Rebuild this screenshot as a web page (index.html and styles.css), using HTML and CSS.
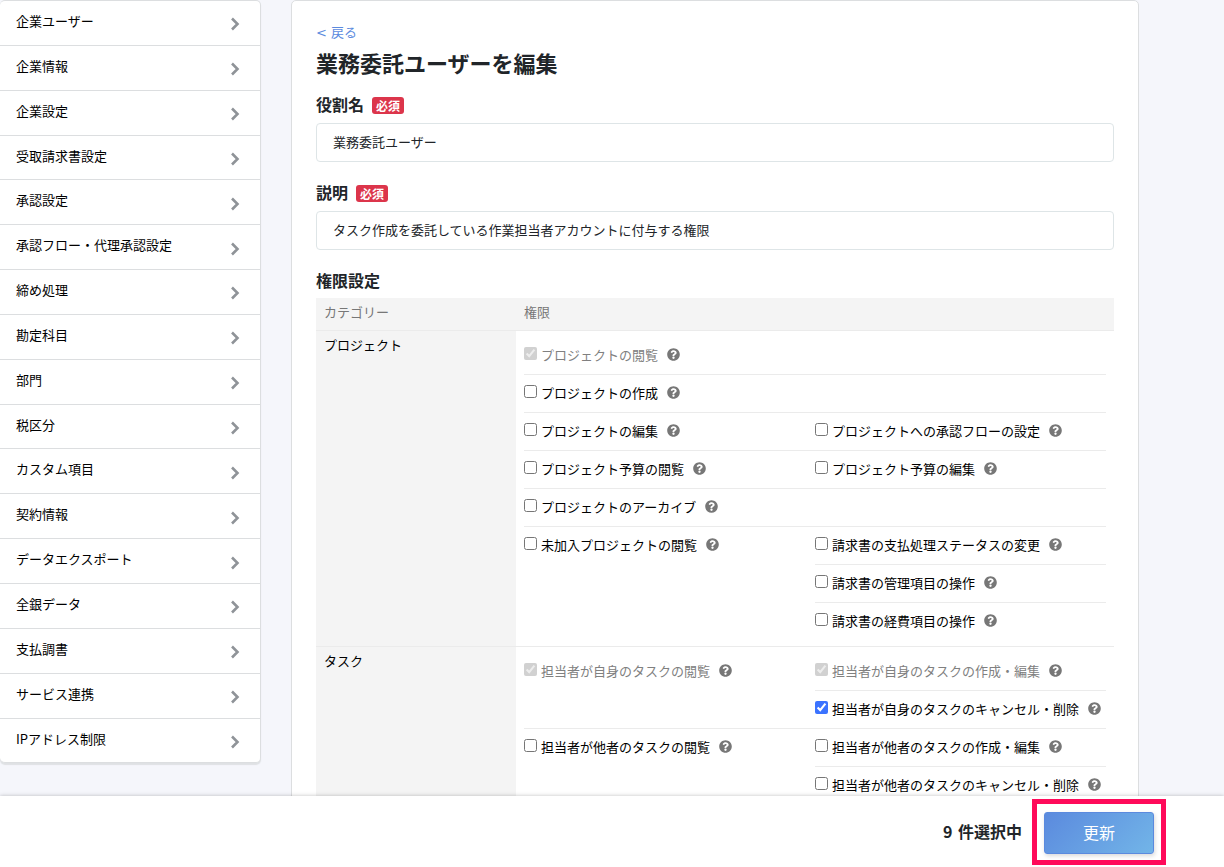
FILE: index.html
```html
<!DOCTYPE html>
<html lang="ja">
<head>
<meta charset="utf-8">
<meta name="viewport" content="width=device-width, initial-scale=1">
<title>業務委託ユーザーを編集</title>
<link rel="stylesheet" href="styles.css">
</head>
<body>
<svg class="sprite" aria-hidden="true">
  <symbol id="chevron" viewBox="0 0 10 14"><path d="M2 1.5 7.5 7 2 12.5" fill="none" stroke="currentColor" stroke-width="2.6"/></symbol>
  <symbol id="help" viewBox="0 0 512 512"><path fill="currentColor" d="M504 256c0 137-111 248-248 248S8 393 8 256 119 8 256 8s248 111 248 248zM262.700 90c-54.500 0-89.300 23-116.500 63.800-3.500 5.300-2.400 12.400 2.700 16.300l34.700 26.300c5.200 3.900 12.600 3 16.700-2.100 17.900-22.700 30.100-35.800 57.300-35.800 20.400 0 45.700 13.100 45.700 33 0 15-12.400 22.700-32.500 34C247.100 238.500 216 255 216 296v4c0 6.600 5.400 12 12 12h56c6.600 0 12-5.400 12-12v-1.300c0-28.800 84-30 84-108C380 132 319 90 262.700 90zM256 338c-25.400 0-46 20.600-46 46s20.600 46 46 46 46-20.600 46-46-20.600-46-46-46z"/></symbol>
</svg>
<div class="app">
  <div class="content">
    <nav class="sidebar" aria-label="設定メニュー">
      <a class="menu-item" href="#">企業ユーザー<svg class="chevron"><use href="#chevron"/></svg></a>
      <a class="menu-item" href="#">企業情報<svg class="chevron"><use href="#chevron"/></svg></a>
      <a class="menu-item" href="#">企業設定<svg class="chevron"><use href="#chevron"/></svg></a>
      <a class="menu-item" href="#">受取請求書設定<svg class="chevron"><use href="#chevron"/></svg></a>
      <a class="menu-item" href="#">承認設定<svg class="chevron"><use href="#chevron"/></svg></a>
      <a class="menu-item" href="#">承認フロー・代理承認設定<svg class="chevron"><use href="#chevron"/></svg></a>
      <a class="menu-item" href="#">締め処理<svg class="chevron"><use href="#chevron"/></svg></a>
      <a class="menu-item" href="#">勘定科目<svg class="chevron"><use href="#chevron"/></svg></a>
      <a class="menu-item" href="#">部門<svg class="chevron"><use href="#chevron"/></svg></a>
      <a class="menu-item" href="#">税区分<svg class="chevron"><use href="#chevron"/></svg></a>
      <a class="menu-item" href="#">カスタム項目<svg class="chevron"><use href="#chevron"/></svg></a>
      <a class="menu-item" href="#">契約情報<svg class="chevron"><use href="#chevron"/></svg></a>
      <a class="menu-item" href="#">データエクスポート<svg class="chevron"><use href="#chevron"/></svg></a>
      <a class="menu-item" href="#">全銀データ<svg class="chevron"><use href="#chevron"/></svg></a>
      <a class="menu-item" href="#">支払調書<svg class="chevron"><use href="#chevron"/></svg></a>
      <a class="menu-item" href="#">サービス連携<svg class="chevron"><use href="#chevron"/></svg></a>
      <a class="menu-item" href="#">IPアドレス制限<svg class="chevron"><use href="#chevron"/></svg></a>
    </nav>

    <main class="card">
      <a class="back" href="#">&lt; 戻る</a>
      <h1 class="title">業務委託ユーザーを編集</h1>

      <div class="field">
        <label class="label" for="role-name">役割名<span class="badge">必須</span></label>
        <input class="input" id="role-name" type="text" value="業務委託ユーザー">
      </div>
      <div class="field">
        <label class="label" for="role-desc">説明<span class="badge">必須</span></label>
        <input class="input" id="role-desc" type="text" value="タスク作成を委託している作業担当者アカウントに付与する権限">
      </div>

      <h2 class="subtitle">権限設定</h2>
      <table class="permissions">
        <thead>
          <tr><th class="category">カテゴリー</th><th>権限</th></tr>
        </thead>
        <tbody>
          <tr>
            <th class="category" scope="row">プロジェクト</th>
            <td>
              <div class="group">
                <div class="options"><div class="option"><input type="checkbox" id="p1" checked disabled><label for="p1">プロジェクトの閲覧</label><svg class="help"><use href="#help"/></svg></div></div>
              </div>
              <div class="group">
                <div class="options"><div class="option"><input type="checkbox" id="p2"><label for="p2">プロジェクトの作成</label><svg class="help"><use href="#help"/></svg></div></div>
              </div>
              <div class="group">
                <div class="options"><div class="option"><input type="checkbox" id="p3"><label for="p3">プロジェクトの編集</label><svg class="help"><use href="#help"/></svg></div></div>
                <div class="options"><div class="option"><input type="checkbox" id="p4"><label for="p4">プロジェクトへの承認フローの設定</label><svg class="help"><use href="#help"/></svg></div></div>
              </div>
              <div class="group">
                <div class="options"><div class="option"><input type="checkbox" id="p5"><label for="p5">プロジェクト予算の閲覧</label><svg class="help"><use href="#help"/></svg></div></div>
                <div class="options"><div class="option"><input type="checkbox" id="p6"><label for="p6">プロジェクト予算の編集</label><svg class="help"><use href="#help"/></svg></div></div>
              </div>
              <div class="group">
                <div class="options"><div class="option"><input type="checkbox" id="p7"><label for="p7">プロジェクトのアーカイブ</label><svg class="help"><use href="#help"/></svg></div></div>
              </div>
              <div class="group">
                <div class="options"><div class="option"><input type="checkbox" id="p8"><label for="p8">未加入プロジェクトの閲覧</label><svg class="help"><use href="#help"/></svg></div></div>
                <div class="options">
                  <div class="option"><input type="checkbox" id="p9"><label for="p9">請求書の支払処理ステータスの変更</label><svg class="help"><use href="#help"/></svg></div>
                  <div class="option"><input type="checkbox" id="p10"><label for="p10">請求書の管理項目の操作</label><svg class="help"><use href="#help"/></svg></div>
                  <div class="option"><input type="checkbox" id="p11"><label for="p11">請求書の経費項目の操作</label><svg class="help"><use href="#help"/></svg></div>
                </div>
              </div>
            </td>
          </tr>
          <tr>
            <th class="category" scope="row">タスク</th>
            <td>
              <div class="group">
                <div class="options"><div class="option"><input type="checkbox" id="t1" checked disabled><label for="t1">担当者が自身のタスクの閲覧</label><svg class="help"><use href="#help"/></svg></div></div>
                <div class="options">
                  <div class="option"><input type="checkbox" id="t2" checked disabled><label for="t2">担当者が自身のタスクの作成・編集</label><svg class="help"><use href="#help"/></svg></div>
                  <div class="option"><input type="checkbox" id="t3" checked><label for="t3">担当者が自身のタスクのキャンセル・削除</label><svg class="help"><use href="#help"/></svg></div>
                </div>
              </div>
              <div class="group">
                <div class="options"><div class="option"><input type="checkbox" id="t4"><label for="t4">担当者が他者のタスクの閲覧</label><svg class="help"><use href="#help"/></svg></div></div>
                <div class="options">
                  <div class="option"><input type="checkbox" id="t5"><label for="t5">担当者が他者のタスクの作成・編集</label><svg class="help"><use href="#help"/></svg></div>
                  <div class="option"><input type="checkbox" id="t6"><label for="t6">担当者が他者のタスクのキャンセル・削除</label><svg class="help"><use href="#help"/></svg></div>
                </div>
              </div>
            </td>
          </tr>
        </tbody>
      </table>
    </main>
  </div>

  <footer class="actions">
    <span class="count"><span class="number">9</span> 件選択中</span>
    <div class="highlight"><button class="submit" type="submit">更新</button></div>
  </footer>
</div>
</body>
</html>
```

FILE: styles.css
```css
* { box-sizing: border-box; }

body {
  margin: 0;
  background: #f5f6fb;
  color: #000;
  font-family: "Noto Sans CJK JP", sans-serif;
  font-size: 13px;
  line-height: 18px;
}

.sprite { display: none; }

.app {
  display: flex;
  flex-direction: column;
  height: 100vh;
}

.content {
  flex: 1;
  min-height: 0;
  display: flex;
  align-items: flex-start;
  gap: 30px;
  padding-right: 85px;
  overflow-y: auto;
  scrollbar-width: none;
}

/* Sidebar */
.sidebar {
  flex: 0 0 261px;
  background: #fff;
  border: 1px solid #dcdee0;
  border-left: 0;
  border-radius: 5px;
  box-shadow: 0 2px 1px #dfe1e4;
}

.menu-item {
  display: flex;
  align-items: center;
  justify-content: space-between;
  padding: 11px 20px 14px 16px;
  border-top: 1px solid #dcdee0;
  color: #000;
  line-height: 1.45;
  text-decoration: none;
}

.menu-item:first-child { border-top: 0; }

.chevron {
  width: 10px;
  height: 14px;
  margin: 3px 0 -3px;
  color: #8f9398;
}

/* Main card */
.card {
  flex: 1;
  min-width: 0;
  padding: 23px 24px 24px;
  background: #fff;
  border: 1px solid #dcdee0;
  border-radius: 5px;
}

.back {
  display: block;
  color: #5b8ade;
  font-family: "DejaVu Sans", "Noto Sans CJK JP", sans-serif;
  text-decoration: none;
}

.title {
  margin: 4px 0 13px;
  color: #212529;
  font-size: 22px;
  line-height: 33px;
}

.field { margin-bottom: 19px; }

.label {
  display: flex;
  align-items: center;
  gap: 8px;
  margin-bottom: 6px;
  color: #212529;
  font-size: 16px;
  font-weight: 700;
  line-height: 25px;
}

.field + .field .label,
.field + .subtitle { margin-top: -1px; }

.badge {
  margin-top: 2px;
  padding: 0 4px;
  background: #dc354b;
  border-radius: 3px;
  color: #fff;
  font-size: 12px;
  line-height: 17px;
}

.input {
  display: block;
  width: 100%;
  height: 39px;
  padding: 0 16px 2px;
  background: #fff;
  border: 1px solid #dee5e7;
  border-radius: 4px;
  color: #212529;
  font: inherit;
}

.subtitle {
  margin: 0 0 6px;
  color: #212529;
  font-size: 16px;
  line-height: 24px;
}

/* Permission table */
.permissions {
  width: 100%;
  border-spacing: 0;
  table-layout: fixed;
}

.permissions th {
  padding: 5px 8px 9px;
  background: #f4f4f4;
  font-weight: 400;
  text-align: left;
  vertical-align: top;
}

.permissions thead th { color: #777; }
.permissions .category { width: 200px; }

.permissions td { padding: 6px 8px; }

.permissions tbody th,
.permissions tbody td { border-top: 1px solid #ebebeb; }

.group {
  display: grid;
  grid-template-columns: 1fr 1fr;
  border-bottom: 1px solid #ebebeb;
}

.group:last-child { border-bottom: 0; }

.option {
  display: flex;
  align-items: center;
  height: 37px;
  padding-bottom: 2px;
}

.option + .option {
  height: 38px;
  border-top: 1px solid #ebebeb;
}

.option input {
  width: 13px;
  height: 13px;
  margin: 0 4px 3px 0;
  accent-color: #3b73ff;
}

.option input:disabled + label { color: #808080; }

.help {
  width: 13px;
  height: 13px;
  margin-left: 9px;
  color: #777;
}

/* Bottom bar */
.actions {
  z-index: 1;
  display: flex;
  align-items: center;
  justify-content: flex-end;
  gap: 10px;
  padding: 3px 58px 2px 0;
  background: #fff;
  box-shadow: 0 0 4px rgba(0, 0, 0, 0.25);
}

.count {
  padding-bottom: 3px;
  color: #212529;
  font-size: 16px;
  font-weight: 700;
}

.number { margin-right: 2px; }

.highlight {
  padding: 8px 7px 6px;
  border: 5px solid #ff0a5a;
}

.submit {
  display: block;
  width: 110px;
  height: 42px;
  padding: 0 0 2px;
  background: linear-gradient(135deg, #5b8ade, #72b5e8);
  border: 1px solid #5b8ade;
  border-radius: 3px;
  box-shadow: 1px 2px 4px rgba(0, 0, 0, 0.15);
  color: #fff;
  font: inherit;
  font-size: 16px;
}
```
